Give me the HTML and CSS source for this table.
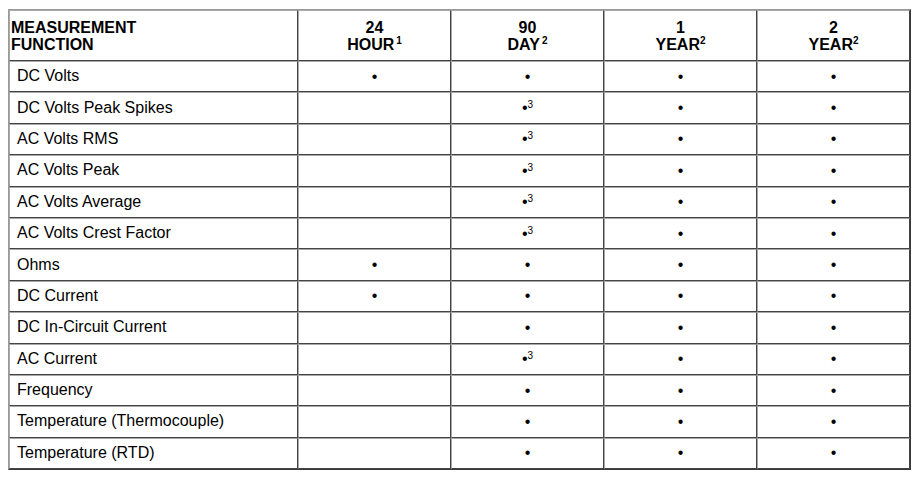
FILE: index.html
```html
<!DOCTYPE html>
<html>
<head>
<meta charset="utf-8">
<link rel="stylesheet" href="styles.css">
</head>
<body>
<table class="spec">
  <colgroup>
    <col class="c-func"><col class="c-p"><col class="c-p"><col class="c-p"><col class="c-p">
  </colgroup>
  <thead>
    <tr>
      <th class="func-h">MEASUREMENT<br>FUNCTION</th>
      <th>24<br>HOUR<sup>1</sup></th>
      <th>90<br>DAY<sup>2</sup></th>
      <th>1<br>YEAR<sup class="tight">2</sup></th>
      <th>2<br>YEAR<sup class="tight">2</sup></th>
    </tr>
  </thead>
  <tbody>
    <tr><td class="func">DC Volts</td><td>•</td><td>•</td><td>•</td><td>•</td></tr>
    <tr><td class="func">DC Volts Peak Spikes</td><td></td><td><span class="dot3">•<sup>3</sup></span></td><td>•</td><td>•</td></tr>
    <tr><td class="func">AC Volts RMS</td><td></td><td><span class="dot3">•<sup>3</sup></span></td><td>•</td><td>•</td></tr>
    <tr><td class="func">AC Volts Peak</td><td></td><td><span class="dot3">•<sup>3</sup></span></td><td>•</td><td>•</td></tr>
    <tr><td class="func">AC Volts Average</td><td></td><td><span class="dot3">•<sup>3</sup></span></td><td>•</td><td>•</td></tr>
    <tr><td class="func">AC Volts Crest Factor</td><td></td><td><span class="dot3">•<sup>3</sup></span></td><td>•</td><td>•</td></tr>
    <tr><td class="func">Ohms</td><td>•</td><td>•</td><td>•</td><td>•</td></tr>
    <tr><td class="func">DC Current</td><td>•</td><td>•</td><td>•</td><td>•</td></tr>
    <tr><td class="func">DC In-Circuit Current</td><td></td><td>•</td><td>•</td><td>•</td></tr>
    <tr><td class="func">AC Current</td><td></td><td><span class="dot3">•<sup>3</sup></span></td><td>•</td><td>•</td></tr>
    <tr><td class="func">Frequency</td><td></td><td>•</td><td>•</td><td>•</td></tr>
    <tr><td class="func">Temperature (Thermocouple)</td><td></td><td>•</td><td>•</td><td>•</td></tr>
    <tr><td class="func">Temperature (RTD)</td><td></td><td>•</td><td>•</td><td>•</td></tr>
  </tbody>
</table>
</body>
</html>
```
FILE: styles.css
```css
html, body {
  margin: 0;
  padding: 0;
  background: #fff;
}
body {
  padding: 9px 8px 8px 8px;
  font-family: "Liberation Sans", Arial, sans-serif;
  color: #000;
}
.spec {
  border-collapse: separate;
  border-spacing: 0;
  width: 903px;
  table-layout: fixed;
  border: 1px solid;
  border-color: #9a9a9a #3a3a3a #3a3a3a #9a9a9a;
}
.c-func { width: 289px; }
.c-p { width: 153px; }
.spec th, .spec td {
  border: 1px solid;
  border-color: #a8a8a8 #444 #444 #a8a8a8;
  padding: 0;
}
.spec th {
  height: 48px;
  font-weight: bold;
  font-size: 16px;
  line-height: 17px;
  text-align: center;
  vertical-align: middle;
  padding-top: 1px;
}
.spec th.func-h {
  text-align: left;
  padding-left: 1px;
}
.spec th sup {
  font-size: 10px;
  line-height: 0;
  vertical-align: 6px;
  margin-left: 2px;
}
.spec th sup.tight { margin-left: 0; font-size: 10px; }
.spec tbody tr { height: 31.4px; }
.spec td {
  font-size: 16px;
  text-align: center;
  vertical-align: middle;
  line-height: 18px;
}
.spec td.func {
  text-align: left;
  padding-left: 7px;
  padding-bottom: 1px;
}
.dot3 sup {
  font-size: 10px;
  line-height: 0;
  vertical-align: 5px;
}
```
